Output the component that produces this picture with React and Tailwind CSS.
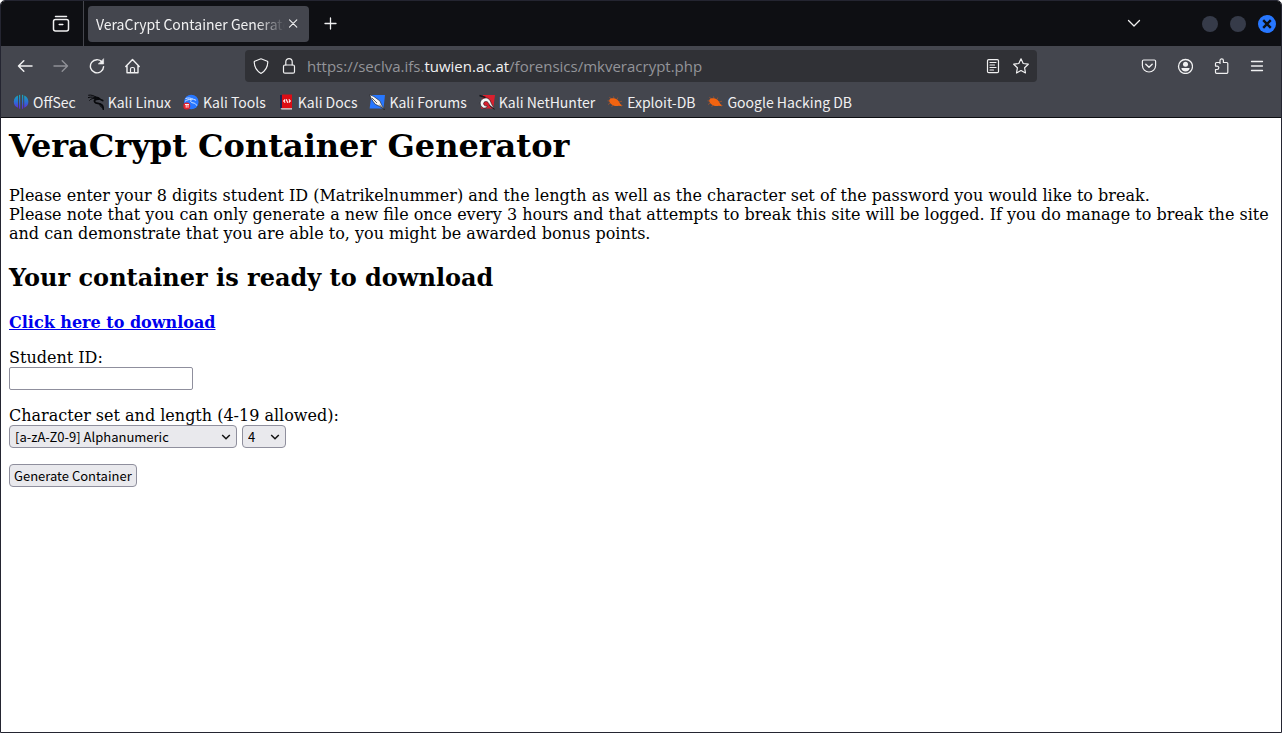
import React from 'react';

const stroke = {
  viewBox: '0 0 16 16',
  width: 16,
  height: 16,
  fill: 'none',
  stroke: 'currentColor',
  strokeWidth: 1.2,
  strokeLinecap: 'round',
  strokeLinejoin: 'round',
  'aria-hidden': true,
};

const Icon = ({ children }) => <svg {...stroke}>{children}</svg>;

const FirefoxView = () => (
  <svg {...stroke} width="18" height="18" viewBox="0 0 18 18" strokeWidth="1.5">
    <path d="M3.5 1.500h11" />
    <rect x="1.5" y="4.5" width="15" height="11.500" rx="2" />
    <path d="M7.2 9.5h3.6" />
  </svg>
);
const Close = () => <Icon><path d="M4.500 3.800l7.300 7.300M11.800 3.800l-7.300 7.300" strokeWidth="1.100" /></Icon>;
const Plus = () => <Icon><path d="M7.500 2v11M2 7.500h11" strokeWidth="1.300" /></Icon>;
const Chevron = () => <Icon><path d="M2.500 4.500L8 10l5.500-5.500" strokeWidth="1.3" /></Icon>;
const Back = () => <Icon><path d="M15 8H1.500M6.800 2.700L1.500 8l5.300 5.300" strokeWidth="1.500" /></Icon>;
const Forward = () => <Icon><path d="M1 8h13.500M9.200 2.700L14.500 8l-5.300 5.300" strokeWidth="1.400" /></Icon>;
const Reload = () => (
  <Icon>
    <path d="M13.200 4.200A6.600 6.600 0 1 0 14.600 8.600" strokeWidth="1.400" />
    <path d="M14.600 1v5h-5z" fill="currentColor" strokeWidth="0.600" />
  </Icon>
);
const Home = () => (
  <Icon>
    <path d="M.800 8.500L7.500 1.500l6.700 7M2 7.500v7.300h11V7.500" strokeWidth="1.400" />
    <path d="M5.500 14.500V11A1.500 1.500 0 0 1 7 9.500h1A1.500 1.500 0 0 1 9.500 11v3.500" />
  </Icon>
);
const Shield = () => (
  <Icon><path d="M8 .800l6.300 2.400c.4.200.5.400.5.800-.1 5-1.800 8.600-6.800 11.400C3 12.600 1.300 9 1.200 4c0-.4.1-.6.500-.8z" /></Icon>
);
const Lock = () => (
  <Icon><rect x="2.500" y="7" width="11" height="8.200" rx="1.500" /><path d="M4.800 7V3.800a3.200 3.200 0 0 1 6.400 0V7" /></Icon>
);
const Reader = () => (
  <Icon><rect x="2.500" y="1.600" width="11" height="13" rx="1.200" /><path d="M5 4.500h6M5 7h4.500M5 9.500h6M5 12h3.500" /></Icon>
);
const Star = () => (
  <Icon><path d="M8 .800l2.200 4.700 5.100.700-3.700 3.600.9 5.200L8 12.500 3.500 15l.9-5.200L.7 6.200l5.100-.7z" /></Icon>
);
const Pocket = () => (
  <Icon><path d="M2.600 2h10.800A1.200 1.200 0 0 1 14.600 3.200v4.200a6.600 6.600 0 0 1-13.200 0V3.200A1.200 1.200 0 0 1 2.600 2z" /><path d="M4.800 6.200L8 9.200l3.200-3" strokeWidth="1.400" /></Icon>
);
const Account = () => (
  <Icon>
    <circle cx="8.500" cy="8.500" r="7" strokeWidth="1.300" />
    <circle cx="8.500" cy="6.300" r="2.500" fill="currentColor" stroke="none" />
    <path d="M4.400 10.100h8.200c0 2-1.800 3.400-4.100 3.400s-4.100-1.400-4.100-3.400z" fill="currentColor" stroke="none" />
  </Icon>
);
const Puzzle = () => (
  <Icon><path d="M7 5.500V2.600a1.700 1.700 0 0 1 3.400 0V4.500h3.400a1 1 0 0 1 1 1v8.800a1 1 0 0 1-1 1H3.500a1 1 0 0 1-1-1V11.500h1.600a1.700 1.700 0 0 0 0-3.400H2.500V5.500a1 1 0 0 1 1-1H7" /></Icon>
);
const Menu = () => <Icon><path d="M2.500 3.500h11M2.500 8h11M2.500 12.500h11" strokeWidth="1.300" strokeLinecap="round" /></Icon>;

const OffSecLogo = () => (
  <svg width="16" height="16" viewBox="0 0 16 16" aria-hidden="true">
    <defs>
      <linearGradient id="offsec" x1="0" y1="0" x2="0" y2="1">
        <stop offset="0" stopColor="#16a8b4" />
        <stop offset="0.5" stopColor="#2b6fd6" />
        <stop offset="1" stopColor="#6a1fd8" />
      </linearGradient>
    </defs>
    <path d="M5 1.500v12.300C2.300 12.800.800 10.600.800 7.800S2.300 2.600 5 1.500zM6 1.100L7.200.800v14.500L6 14.200zM9 .800l1.200.3v13.100L9 15.300zM11.200 1.500c2.700 1.100 4.200 3.500 4.200 6.300s-1.500 5-4.200 6z" fill="url(#offsec)" />
  </svg>
);
const KaliLogo = () => (
  <svg width="16" height="16" viewBox="0 0 16 16" fill="none" stroke="#08090c" strokeLinecap="round" aria-hidden="true">
    <path d="M.600 1.200C3 .700 5.500 1.400 8 3.200M.300 3.600C3 2.600 5.500 2.900 8 4M1.600 6.300C3 4.600 5 4.200 7.500 4.400" strokeWidth="1" />
    <path d="M7 3.200c2 .2 4 .8 5.300 2.200l2.400 1.200" strokeWidth="1.700" />
    <path d="M10.500 5C7 4.800 5.800 6.700 7 8.300c1.300 1.600 4.800.7 6.800 2.700 1 1 1.400 2.400 1.500 4" strokeWidth="1.800" />
    <path d="M12 10c-.3 1.700.3 2.600 1.600 3.200" strokeWidth="1" />
  </svg>
);
const ToolsLogo = () => (
  <svg width="16" height="16" viewBox="0 0 16 16" aria-hidden="true">
    <circle cx="8.300" cy="8" r="7.300" fill="#2777ff" />
    <path d="M2.500 4.500c3-.9 5.200-.6 8 .8l2.600 1M2 7.300c2-1.600 4-1.900 6.500-1.900M9.500 5.500c-3 .8-2.200 3 .6 3.400 2 .3 3 1.200 3.600 2.700" fill="none" stroke="#d6e7ff" strokeWidth="1" />
    <circle cx="3.800" cy="12" r="3.500" fill="#e5202b" />
    <path d="M2 10.500h4M3.200 10.700v3M5 10.700v3" stroke="#fff" strokeWidth="0.900" />
  </svg>
);
const DocsLogo = () => (
  <svg width="16" height="16" viewBox="0 0 16 16" aria-hidden="true">
    <path d="M2 1h2v13.500H2z" fill="#1e2350" />
    <path d="M4 .500h10v14H4z" fill="#dc0d15" />
    <path d="M2.500 14.300H14v1.200H3.500z" fill="#e9dfe0" />
    <path d="M7.200 5.500L5.700 7l1.500 1.700M10.800 5.300L12.300 7l-1.500 1.500M8.300 5.300l1.400 3.400" fill="none" stroke="#fff" strokeWidth="1.100" />
  </svg>
);
const ForumsLogo = () => (
  <svg width="16" height="16" viewBox="0 0 16 16" aria-hidden="true">
    <path d="M2.500 1H16l-1.500 13.500H.600z" fill="#2777ff" />
    <path d="M.500.600l4.300 1.900 3 2.200 3.200 2.400 1.500 3.700 3.300 4.900-5.300-3.400-4.200-2L4 7.300 2.300 4.500z" fill="#f5f5f5" stroke="#15171c" strokeWidth="0.600" />
    <path d="M3 4l5 5M10.500 11l4.700 4.500" stroke="#15171c" strokeWidth="0.700" />
  </svg>
);
const NetHunterLogo = () => (
  <svg width="16" height="16" viewBox="0 0 16 16" aria-hidden="true">
    <path d="M4 1h12l-1.800 13.500H2z" fill="#d9202e" />
    <path d="M.500 1.500l6 2" stroke="#15171c" strokeWidth="1.500" />
    <path d="M4.500 14C-.8 11.500.8 4.700 6 4c3.700-.4 5.300 2.200 6.300 5.600l3.200 5.700-4.500-3.500C9.700 9 8.500 6.900 6.300 7.600c-2.300.8-2.400 3.200.1 4.200l1.800.2c.2 1.400-1.700 2.400-3.700 2z" fill="#f5f5f5" stroke="#15171c" strokeWidth="0.600" />
    <path d="M10.500 11.500l4.500 3.500" stroke="#15171c" strokeWidth="0.900" />
  </svg>
);
const BugLogo = () => (
  <svg width="16" height="16" viewBox="0 0 16 16" aria-hidden="true">
    <path d="M4 5L2.500 3M7 4.500L6.500 2.500M10 5.500l.8-2M2.500 7L.500 6.800M3.500 9L1 10.500M6 11l-1.500 2M12 8l3-.800M13 10.500l2.500 1" stroke="#a6532c" strokeWidth="0.800" />
    <path d="M2.300 6C3 4.200 5.300 3.800 8 4.600c2.300.7 4 2.400 4.500 4.200l2.500 3.400-3.200-.4c-2.700.8-6 .1-8-2C2.600 8.600 2 7.200 2.300 6z" fill="#f26411" />
  </svg>
);

const bookmarks = [
  ['OffSec', OffSecLogo],
  ['Kali Linux', KaliLogo],
  ['Kali Tools', ToolsLogo],
  ['Kali Docs', DocsLogo],
  ['Kali Forums', ForumsLogo],
  ['Kali NetHunter', NetHunterLogo],
  ['Exploit-DB', BugLogo],
  ['Google Hacking DB', BugLogo],
];

const ToolButton = ({ label, disabled, children }) => (
  <button
    type="button"
    aria-label={label}
    disabled={disabled}
    className="flex h-8 w-9 items-center justify-center disabled:text-[#8f9096]"
  >
    {children}
  </button>
);

const Select = ({ label, options, className }) => (
  <span className={`relative flex ${className}`}>
    <select
      aria-label={label}
      className="h-[23px] w-full appearance-none rounded-[4px] border border-[#8f8f9d] bg-[#e9e9ed] pl-[5px] font-['Noto_Sans_CJK_SC','Noto_Sans',sans-serif] text-[13px] leading-[21px] text-black"
    >
      {options.map((o) => <option key={o}>{o}</option>)}
    </select>
    <svg className="pointer-events-none absolute top-[7px] right-[6px]" width="10" height="10" viewBox="0 0 10 10" fill="none" stroke="#111" strokeWidth="1.5" aria-hidden="true">
      <path d="M1.200 3l3.800 3.800L8.800 3" />
    </svg>
  </span>
);

function TitleBar() {
  return (
    <div className="flex h-[45px] items-center bg-[#0e0f13]">
      <div className="flex h-full w-[83px] items-center justify-end border-r border-[#45464d] pr-[13px]">
        <button type="button" aria-label="View recent browsing"><FirefoxView /></button>
      </div>
      <div className="ml-1 flex h-9 w-[221px] items-center rounded-[4px] bg-[#44464e] pr-2 pl-2">
        <span className="flex-1 overflow-hidden mask-r-from-85% text-[14px] leading-6 whitespace-nowrap">VeraCrypt Container Generator</span>
        <button type="button" aria-label="Close tab"><Close /></button>
      </div>
      <button type="button" aria-label="New tab" className="ml-[14px]"><Plus /></button>
      <div className="flex-1" />
      <button type="button" aria-label="List all tabs" className="mr-[60px]"><Chevron /></button>
      <div className="flex items-center gap-3 pr-[5px]">
        <button type="button" aria-label="Minimize" className="size-4 rounded-full bg-[#363b49]" />
        <button type="button" aria-label="Maximize" className="size-4 rounded-full bg-[#363b49]" />
        <button type="button" aria-label="Close window" className="flex size-[18px] items-center justify-center rounded-full bg-[#2777ff] text-[#0e0f13]">
          <svg width="10" height="10" viewBox="0 0 10 10" stroke="currentColor" strokeWidth="2.4" aria-hidden="true"><path d="M1.200 1.200l7.600 7.600M8.800 1.200l-7.600 7.600" /></svg>
        </button>
      </div>
    </div>
  );
}

function NavBar() {
  return (
    <div className="flex h-10 items-center px-[6px]">
      <ToolButton label="Back"><Back /></ToolButton>
      <ToolButton label="Forward" disabled><Forward /></ToolButton>
      <ToolButton label="Reload"><Reload /></ToolButton>
      <ToolButton label="Home"><Home /></ToolButton>
      <div className="mx-[94px] flex h-8 flex-1 items-center rounded-[4px] bg-[#303136] px-2">
        <Shield />
        <span className="ml-3"><Lock /></span>
        <span className="ml-[10px] flex-1 font-['Open_Sans','Noto_Sans',sans-serif] text-[15px] leading-6 text-[#939499]">
          https://seclva.ifs.<span className="text-[#f0f0f1]">tuwien.ac.at</span>/forensics/mkveracrypt.php
        </span>
        <button type="button" aria-label="Reader view" className="mr-3"><Reader /></button>
        <button type="button" aria-label="Bookmark this page"><Star /></button>
      </div>
      <ToolButton label="Save to Pocket"><Pocket /></ToolButton>
      <ToolButton label="Account"><Account /></ToolButton>
      <ToolButton label="Extensions"><Puzzle /></ToolButton>
      <ToolButton label="Menu"><Menu /></ToolButton>
    </div>
  );
}

export default function App() {
  return (
    <div className="flex min-h-screen flex-col overflow-hidden rounded-t-[5px] border border-[#242531] bg-white font-['Noto_Sans_CJK_SC','Noto_Sans',sans-serif] text-[#f0f0f1]">
      <TitleBar />
      <div className="border-b border-[#0e0f13] bg-[#44464e]">
        <NavBar />
        <nav className="flex h-[31px] items-center gap-3 px-3 text-[14px] leading-6">
          {bookmarks.map(([label, Logo]) => (
            <a key={label} href="#" className="flex items-center gap-1 whitespace-nowrap">
              <Logo />
              {label}
            </a>
          ))}
        </nav>
      </div>
      <main className="flex-1 px-2 pt-[9px] font-['DejaVu_Serif',serif] text-[16px] leading-[19px] text-black">
        <h1 className="mb-[21px] text-[32px] leading-[38px] font-bold">VeraCrypt Container Generator</h1>
        <p>
          Please enter your 8 digits student ID (Matrikelnummer) and the length as well as the character set of the password you would like to break.
          <br />
          Please note that you can only generate a new file once every 3 hours and that attempts to break this site will be logged. If you do manage to break the site and can demonstrate that you are able to, you might be awarded bonus points.
        </p>
        <h2 className="mt-5 mb-[21px] text-[24px] leading-[29px] font-bold">Your container is ready to download</h2>
        <a href="#" className="font-bold text-[#0000ee] underline">Click here to download</a>
        <form className="mt-4 flex flex-col items-start">
          <label htmlFor="student">Student ID:</label>
          <input id="student" type="text" className="mb-4 h-[23px] w-[184px] rounded-[2px] border border-[#8f8f9d] bg-white px-1 text-[13px]" />
          <span>Character set and length (4-19 allowed):</span>
          <div className="mb-4 flex gap-[5px]">
            <Select label="Character set" className="w-[228px]" options={['[a-zA-Z0-9] Alphanumeric']} />
            <Select label="Length" className="w-[44px]" options={['4', '5', '6', '7', '8', '9', '10', '11', '12', '13', '14', '15', '16', '17', '18', '19']} />
          </div>
          <button type="button" className="h-[23px] rounded-[4px] border border-[#8f8f9d] bg-[#e9e9ed] px-1 font-['Noto_Sans_CJK_SC','Noto_Sans',sans-serif] text-[13px] leading-[21px]">
            Generate Container
          </button>
        </form>
      </main>
    </div>
  );
}
